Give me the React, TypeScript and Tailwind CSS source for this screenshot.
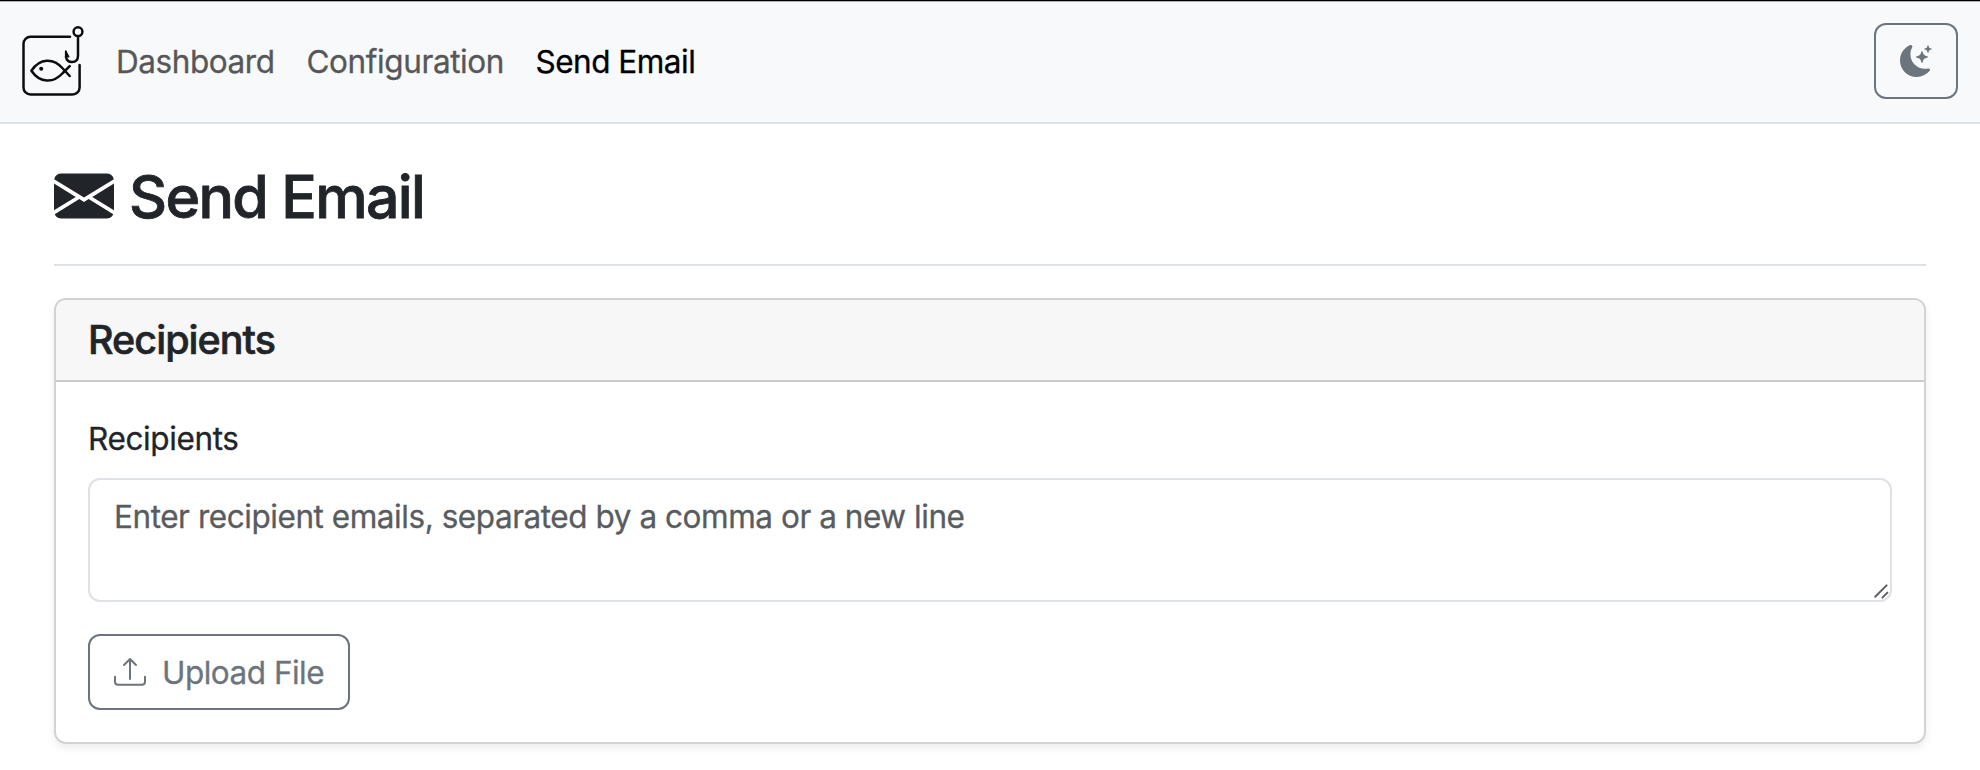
import { BsEnvelopeFill, BsMoonStarsFill, BsUpload } from 'react-icons/bs';

function Logo() {
  return (
    <svg
      className="h-[76px] w-[66px] shrink-0"
      viewBox="20 23 66 76"
      fill="none"
      stroke="#0c0d0e"
      strokeWidth="2.5"
      strokeLinecap="round"
      strokeLinejoin="round"
    >
      <path d="M70 36.8H30.5a7 7 0 0 0-7 7v43.7a7 7 0 0 0 7 7h42.1a7 7 0 0 0 7-7V65" />
      <circle cx="78" cy="31.7" r="4.4" />
      <path d="M78 36.5V55.5c0 4.2-2.4 6.6-6 6.6-3.4 0-5.5-2.1-6-5.3" />
      <path d="M65.8 51.3l3 5.5-2.4-.5z" fill="#0c0d0e" strokeWidth="1.4" />
      <path d="M65.8 51.5v5.5" strokeWidth="1.8" />
      <path d="M69.7 66.2L62.8 73C53.5 83.4 40 83.4 31.4 70.7 40 57.8 53.5 57.8 62.8 68.5l6.9 7.5" />
      <circle cx="41.2" cy="68.7" r="2" fill="#0c0d0e" stroke="none" />
    </svg>
  );
}

export default function App() {
  return (
    <div className="h-[770px] overflow-hidden bg-white font-['Inter',sans-serif] text-[31.5px] leading-[48px] text-[#212529] [-webkit-text-stroke-width:0.3px]">
      <div className="h-px bg-black" />
      <header className="flex h-[123px] items-center border-t border-b-2 border-t-[#b0b0b2] border-b-[#dee2e6] bg-[#f8f9fb] pr-[22px] pb-[2px] pl-5">
        <Logo />
        <nav className="ml-[30px] flex pt-[2px] text-[#575758]">
          <a className="w-[190.5px] tracking-[-0.43px]">Dashboard</a>
          <a className="w-[229px] tracking-[-0.4px]">Configuration</a>
          <a className="tracking-[-0.5px] text-black">Send Email</a>
        </nav>
        <button className="ml-auto flex h-[76px] w-[84px] items-center justify-center rounded-xl border-2 border-[#6c757d] text-[#6c757d]">
          <BsMoonStarsFill className="size-8" />
        </button>
      </header>

      <main className="px-[54px] pt-9">
        <h1 className="flex h-[72px] items-center gap-[15px] text-[59px] leading-[72px] font-medium tracking-[-1.65px] [-webkit-text-stroke-width:0.8px]">
          <BsEnvelopeFill className="size-[60px]" />
          <span className="pt-[2px]">Send Email</span>
        </h1>
        <hr className="mt-8 mb-8 border-t-2 border-[#dee2e6]" />

        <section className="overflow-hidden rounded-xl border-2 border-[#d2d2d2] shadow-[0_4px_8px_rgba(0,0,0,0.075)]">
          <h2 className="border-b-2 border-[#cbcbcb] bg-[#f7f7f7] px-8 py-4 text-[39.5px] leading-[48px] font-medium tracking-[-0.97px] [-webkit-text-stroke-width:0.6px]">
            Recipients
          </h2>
          <div className="p-8">
            <label htmlFor="recipients" className="mb-[15px] block pt-px tracking-[-0.37px]">
              Recipients
            </label>
            <div className="relative mb-8 flex">
              <textarea
                id="recipients"
                placeholder="Enter recipient emails, separated by a comma or a new line"
                className="h-[124px] w-full resize-none rounded-xl border-2 border-[#dee2e6] px-6 pt-[13px] pb-3 tracking-[-0.45px] placeholder:text-[#595c5f]"
              />
              <svg
                className="absolute right-[2px] bottom-[2px] h-[18px] w-[18px]"
                viewBox="0 0 18 18"
                stroke="#5f5f5f"
                strokeWidth="2"
                strokeLinecap="round"
              >
                <path d="M3.2 14.8L14.6 3.4M10.4 15.6l5-5" />
              </svg>
            </div>
            <button className="flex h-[76px] w-[262px] items-center gap-4 rounded-xl border-2 border-[#6c757d] px-6 tracking-[-0.5px] whitespace-nowrap text-[#6c757d]">
              <BsUpload className="size-8 shrink-0" />
              <span className="pt-[2px]">Upload File</span>
            </button>
          </div>
        </section>
      </main>
    </div>
  );
}
